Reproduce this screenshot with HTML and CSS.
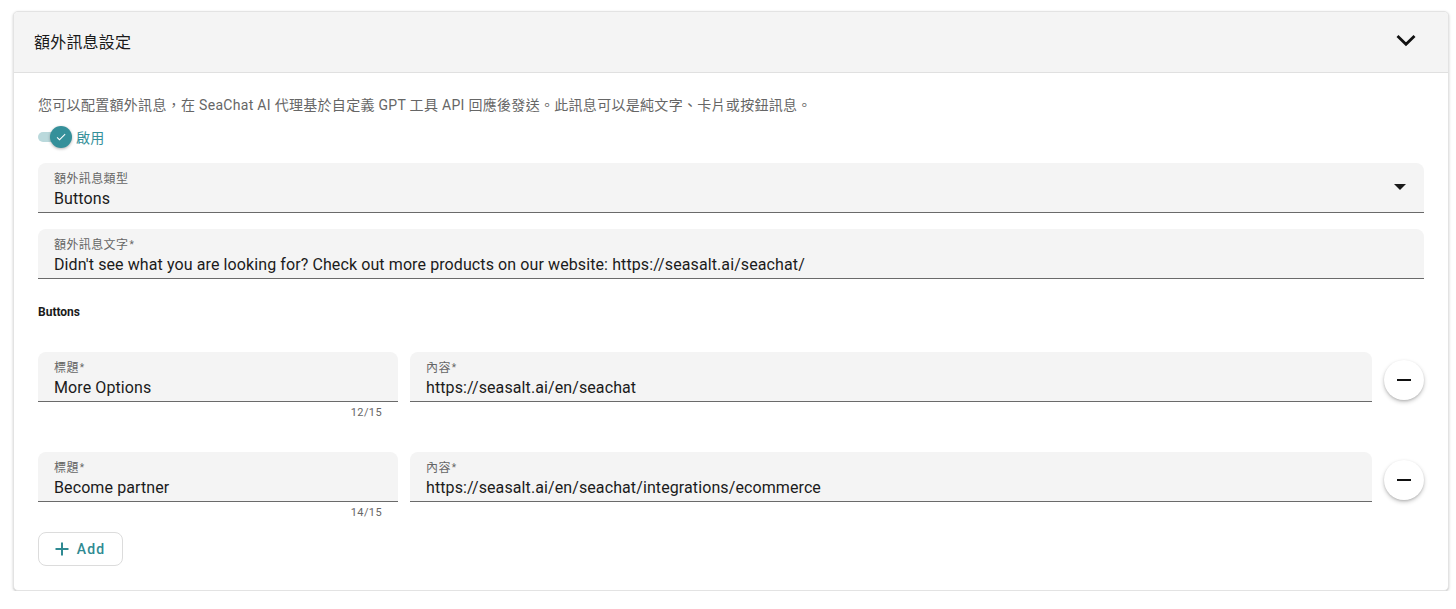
FILE: index.html
```html
<!DOCTYPE html>
<html lang="zh-Hant">
<head>
<meta charset="utf-8">
<title>額外訊息設定</title>
<link rel="stylesheet" href="styles.css">
</head>
<body>
<div class="page">
  <section class="card">
    <header class="card-header">
      <h2 class="card-title">額外訊息設定</h2>
      <svg class="chevron" width="24" height="24" viewBox="0 0 24 24"><path d="M4.5 8 12 15.3 19.5 8" fill="none" stroke="#111" stroke-width="2.8" stroke-linecap="square"/></svg>
    </header>
    <div class="card-body">
      <p class="desc">您可以配置額外訊息，在 SeaChat AI 代理基於自定義 GPT 工具 API 回應後發送。此訊息可以是純文字、卡片或按鈕訊息。</p>
      <div class="toggle-row">
        <span class="switch">
          <span class="track"></span>
          <span class="thumb"><svg width="12" height="12" viewBox="0 0 24 24"><path d="M9 16.2 4.8 12l-1.4 1.4L9 19 21 7l-1.4-1.4z" fill="#fff"/></svg></span>
        </span>
        <span class="toggle-label">啟用</span>
      </div>

      <div class="field select">
        <div class="field-inner">
          <span class="label">額外訊息類型</span>
          <span class="value">Buttons</span>
        </div>
        <span class="caret"></span>
      </div>

      <div class="field text">
        <div class="field-inner">
          <span class="label">額外訊息文字<span class="req">*</span></span>
          <span class="value">Didn't see what you are looking for? Check out more products on our website: https://seasalt.ai/seachat/</span>
        </div>
      </div>

      <h3 class="section-title">Buttons</h3>

      <div class="btn-row">
        <div class="col-title">
          <div class="field">
            <div class="field-inner">
              <span class="label">標題<span class="req">*</span></span>
              <span class="value">More Options</span>
            </div>
          </div>
          <div class="counter">12/15</div>
        </div>
        <div class="col-content">
          <div class="field">
            <div class="field-inner">
              <span class="label">內容<span class="req">*</span></span>
              <span class="value">https://seasalt.ai/en/seachat</span>
            </div>
          </div>
        </div>
        <button class="remove" type="button" aria-label="remove"><span class="minus"></span></button>
      </div>

      <div class="btn-row">
        <div class="col-title">
          <div class="field">
            <div class="field-inner">
              <span class="label">標題<span class="req">*</span></span>
              <span class="value">Become partner</span>
            </div>
          </div>
          <div class="counter">14/15</div>
        </div>
        <div class="col-content">
          <div class="field">
            <div class="field-inner">
              <span class="label">內容<span class="req">*</span></span>
              <span class="value">https://seasalt.ai/en/seachat/integrations/ecommerce</span>
            </div>
          </div>
        </div>
        <button class="remove" type="button" aria-label="remove"><span class="minus"></span></button>
      </div>

      <button class="add-btn" type="button">
        <svg width="16" height="16" viewBox="0 0 16 16"><path d="M8 1.5v13M1.5 8h13" stroke="#2f8a92" stroke-width="2"/></svg>
        <span>Add</span>
      </button>
    </div>
  </section>
</div>
</body>
</html>
```
FILE: styles.css
```css
* { box-sizing: border-box; }
html, body { margin: 0; padding: 0; background: #fff; }
body {
  font-family: Roboto, "Noto Sans CJK TC", "Noto Sans", sans-serif;
  color: #1d1d1d;
}
.page {
  padding: 11px 7px 0 13px;
}
.card {
  border: 1px solid #e3e3e3;
  border-radius: 5px;
  box-shadow: 0 1px 3px rgba(0,0,0,0.18), 0 1px 1px rgba(0,0,0,0.06);
  overflow: hidden;
  background: #fff;
}
.card-header {
  height: 61px;
  background: #f4f4f4;
  border-bottom: 1px solid #e0e0e0;
  display: flex;
  align-items: center;
  justify-content: space-between;
  padding: 0 30px 3px 20px;
}
.card-title {
  margin: 0;
  font-size: 16px;
  font-weight: 400;
  color: #1a1a1a;
  letter-spacing: 0.2px;
}
.chevron { display: block; }
.card-body {
  padding: 22px 24px 24px 24px;
}
.desc {
  margin: 0;
  font-size: 14px;
  line-height: 20px;
  color: #666;
  letter-spacing: 0.3px;
}
.toggle-row {
  display: flex;
  align-items: center;
  height: 22px;
  margin-top: 11px;
  margin-bottom: 15px;
}
.switch {
  position: relative;
  width: 34px;
  height: 22px;
  display: inline-block;
}
.track {
  position: absolute;
  left: 0;
  top: 6px;
  width: 32px;
  height: 10px;
  border-radius: 5px;
  background: #bad9dc;
}
.thumb {
  position: absolute;
  left: 12px;
  top: 0;
  width: 22px;
  height: 22px;
  border-radius: 50%;
  background: #35909a;
  box-shadow: 0 1px 3px rgba(0,0,0,0.3);
  display: flex;
  align-items: center;
  justify-content: center;
}
.thumb svg { display: block; }
.toggle-label {
  margin-left: 4px;
  font-size: 14px;
  color: #35909a;
  letter-spacing: 0.3px;
}
.field {
  position: relative;
  height: 50px;
  background: #f4f4f4;
  border-radius: 8px 8px 0 0;
  border-bottom: 1px solid #6a6a6a;
  display: flex;
  align-items: stretch;
}
.field-inner {
  flex: 1;
  min-width: 0;
  padding: 8px 16px 0 16px;
  display: flex;
  flex-direction: column;
}
.label {
  font-size: 12px;
  line-height: 16px;
  color: #666;
  letter-spacing: 0.4px;
}
.req {
  font-size: 10px;
  margin-left: 1px;
  vertical-align: 1px;
}
.value {
  font-size: 16px;
  line-height: 22px;
  margin-top: 1px;
  color: #1b1b1b;
  white-space: nowrap;
  letter-spacing: 0.1px;
}
.field.text { margin-top: 16px; }
.caret {
  position: absolute;
  right: 18px;
  top: 21px;
  width: 0;
  height: 0;
  border-left: 6px solid transparent;
  border-right: 6px solid transparent;
  border-top: 6px solid #1a1a1a;
}
.section-title {
  margin: 25px 0 0 0;
  font-size: 12px;
  line-height: 16px;
  font-weight: 700;
  color: #1a1a1a;
}
.btn-row {
  display: flex;
  align-items: flex-start;
  gap: 12px;
  height: 100px;
}
.section-title + .btn-row { margin-top: 32px; }
.col-title { width: 360px; flex: none; }
.col-content { flex: 1; min-width: 0; }
.counter {
  text-align: right;
  padding-right: 16px;
  margin-top: 4px;
  font-size: 11px;
  line-height: 14px;
  color: #666;
  letter-spacing: 0.4px;
}
.remove {
  flex: none;
  width: 40px;
  height: 40px;
  margin-top: 8px;
  border: none;
  border-radius: 50%;
  background: #fff;
  box-shadow: 0 2px 4px rgba(0,0,0,0.22), 0 1px 2px rgba(0,0,0,0.12);
  padding: 0;
  display: flex;
  align-items: center;
  justify-content: center;
  cursor: pointer;
}
.minus {
  display: block;
  width: 14px;
  height: 2px;
  background: #111;
}
.add-btn {
  margin-top: -20px;
  height: 34px;
  width: 85px;
  border: 1px solid #dcdcdc;
  border-radius: 8px;
  background: #fff;
  display: flex;
  align-items: center;
  justify-content: center;
  gap: 7px;
  padding: 0 12px 0 10px;
  font-family: Roboto, sans-serif;
  font-size: 14px;
  font-weight: 500;
  letter-spacing: 1.2px;
  color: #2f8a92;
  cursor: pointer;
}
.add-btn svg { display: block; }
```
